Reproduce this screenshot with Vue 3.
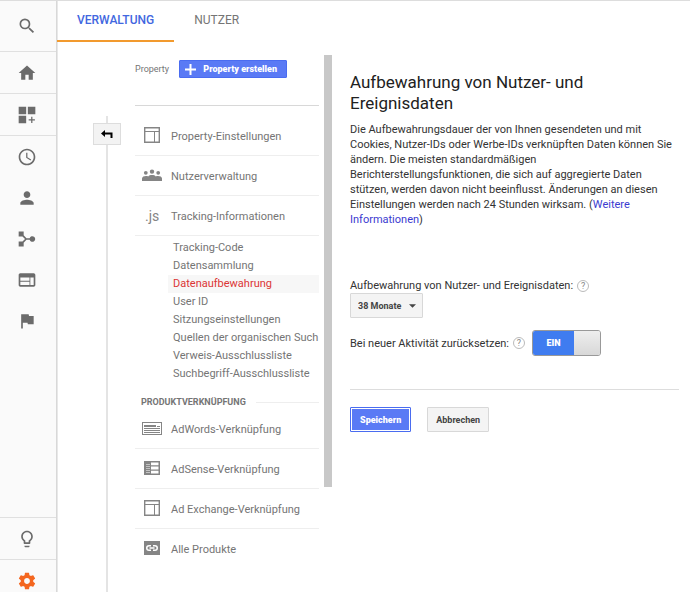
<template>
  <div class="page">
    <aside class="sidebar">
      <a v-for="item in sidebarItems" :key="item.name" href="#" class="sidebar-item" :class="item.name" :aria-label="item.label">
        <svg class="sidebar-icon" viewBox="0 0 24 24">
          <path :d="item.path" />
        </svg>
      </a>
    </aside>

    <div class="main">
      <nav class="tabs">
        <a href="#" class="tab active">VERWALTUNG</a>
        <a href="#" class="tab">NUTZER</a>
      </nav>

      <div class="content">
        <div class="back-column">
          <button type="button" class="back-button" aria-label="Zurück">
            <svg viewBox="0 0 14 10">
              <path d="M1 4.500l4-3.500v2.500h7.500V9h-2V5.500H5V8z" />
            </svg>
          </button>
        </div>

        <div class="property-column">
          <div class="property-header">
            <span>Property</span>
            <button type="button" class="create-button">
              <svg viewBox="0 0 11 11"><path d="M5.5 0v11M0 5.5h11" /></svg>
              Property erstellen
            </button>
          </div>

          <ul class="menu">
            <li v-for="item in menuItems" :key="item.label" class="menu-item">
              <a href="#">
                <span v-if="item.icon === 'js'" class="js-icon">.js</span>
                <svg v-else class="menu-icon" viewBox="0 0 20 16">
                  <path :d="icons[item.icon]" fill-rule="evenodd" />
                </svg>
                {{ item.label }}
              </a>
            </li>
          </ul>

          <ul class="submenu">
            <li v-for="entry in submenu" :key="entry">
              <a href="#" :class="{ selected: entry === selected }" @click.prevent="selected = entry">{{ entry }}</a>
            </li>
          </ul>

          <h2 class="section-title">PRODUKTVERKNÜPFUNG</h2>

          <ul class="menu products">
            <li v-for="item in products" :key="item.label" class="menu-item">
              <a href="#">
                <svg class="menu-icon" viewBox="0 0 20 16">
                  <path :d="icons[item.icon]" fill-rule="evenodd" />
                </svg>
                {{ item.label }}
              </a>
            </li>
          </ul>
        </div>

        <div class="scrollbar"></div>

        <main class="settings">
          <h1>Aufbewahrung von Nutzer- und Ereignisdaten</h1>
          <p class="description">
            Die Aufbewahrungsdauer der von Ihnen gesendeten und mit Cookies, Nutzer-IDs oder Werbe-IDs
            verknüpften Daten können Sie ändern. Die meisten standardmäßigen Berichterstellungsfunktionen,
            die sich auf aggregierte Daten stützen, werden davon nicht beeinflusst. Änderungen an diesen
            Einstellungen werden nach 24 Stunden wirksam. (<a href="#">Weitere Informationen</a>)
          </p>

          <form @submit.prevent>
            <div class="field-label">
              <label for="retention">Aufbewahrung von Nutzer- und Ereignisdaten:</label>
              <span class="help">?</span>
            </div>
            <div class="select-wrapper">
              <select id="retention" v-model="retention">
                <option>38 Monate</option>
              </select>
              <svg class="arrow" viewBox="0 0 8 4"><path d="M0 0h8L4 4z" /></svg>
            </div>

            <div class="reset-row">
              <label for="reset">Bei neuer Aktivität zurücksetzen:</label>
              <span class="help">?</span>
              <label class="switch">
                <input id="reset" v-model="resetOnActivity" type="checkbox" />
                <span class="switch-on">EIN</span>
                <span class="switch-knob"></span>
              </label>
            </div>

            <div class="actions">
              <button type="submit" class="button primary">Speichern</button>
              <button type="button" class="button">Abbrechen</button>
            </div>
          </form>
        </main>
      </div>
    </div>
  </div>
</template>

<script setup>
import { ref } from 'vue'

const retention = ref('38 Monate')
const resetOnActivity = ref(true)
const selected = ref('Datenaufbewahrung')

const sidebarItems = [
  { name: 'search', label: 'Suche', path: 'M15.5 14h-.79l-.28-.27A6.47 6.47 0 0 0 16 9.5 6.5 6.5 0 1 0 9.5 16c1.61 0 3.09-.59 4.23-1.57l.27.28v.79l5 4.99L20.49 19l-4.99-5zm-6 0C7.01 14 5 11.99 5 9.5S7.01 5 9.5 5 14 7.01 14 9.5 11.99 14 9.5 14z' },
  { name: 'home', label: 'Startseite', path: 'M10 20v-6h4v6h5v-8h3L12 3 2 12h3v8z' },
  { name: 'dashboard', label: 'Anpassen', path: 'M2 2h9v9H2zM13 2h9v9h-9zM2 13h9v9H2zM17 14h1.500v3h3v1.500h-3v3H17v-3h-3V17h3z' },
  { name: 'realtime', label: 'Echtzeit', path: 'M11.99 2C6.47 2 2 6.48 2 12s4.47 10 9.99 10C17.52 22 22 17.52 22 12S17.52 2 11.99 2zM12 20c-4.42 0-8-3.58-8-8s3.58-8 8-8 8 3.58 8 8-3.58 8-8 8zm.5-13H11v6l5.25 3.15.75-1.23-4.5-2.67z' },
  { name: 'audience', label: 'Zielgruppe', path: 'M12 12c2.21 0 4-1.79 4-4s-1.79-4-4-4-4 1.79-4 4 1.79 4 4 4zm0 2c-2.67 0-8 1.34-8 4v2h16v-2c0-2.66-5.33-4-8-4z' },
  { name: 'acquisition', label: 'Akquisition', path: 'M2 3h6v4.600L11.400 11H15.200a3.400 3.400 0 1 1 0 2H11.400L8 16.400V21H2v-6h4.600l3-3-3-3H2z' },
  { name: 'behavior', label: 'Verhalten', path: 'M20 4H4c-1.1 0-2 .9-2 2v12c0 1.1.9 2 2 2h16c1.1 0 2-.9 2-2V6c0-1.1-.9-2-2-2zm-5 14H4v-4h11v4zm0-5H4V9h11v4zm5 5h-4V9h4v9z' },
  { name: 'conversions', label: 'Conversions', path: 'M14.4 6L14 4H5v17h2v-7h5.6l.4 2h7V6z' },
  { name: 'discover', label: 'Entdecken', path: 'M9 21c0 .55.45 1 1 1h4c.55 0 1-.45 1-1v-1H9v1zm3-19C8.14 2 5 5.14 5 9c0 2.38 1.19 4.47 3 5.74V17c0 .55.45 1 1 1h6c.55 0 1-.45 1-1v-2.26c1.81-1.27 3-3.36 3-5.74 0-3.86-3.14-7-7-7zm2.85 11.1l-.85.6V16h-4v-2.3l-.85-.6A4.997 4.997 0 0 1 7 9c0-2.76 2.24-5 5-5s5 2.24 5 5c0 1.63-.8 3.16-2.15 4.1z' },
  { name: 'admin', label: 'Verwaltung', path: 'M19.43 12.98c.04-.32.07-.64.07-.98s-.03-.66-.07-.98l2.11-1.65c.19-.15.24-.42.12-.64l-2-3.46c-.12-.22-.39-.3-.61-.22l-2.49 1c-.52-.4-1.08-.73-1.69-.98l-.38-2.65A.488.488 0 0 0 14 2h-4c-.25 0-.46.18-.49.42l-.38 2.65c-.61.25-1.17.59-1.69.98l-2.49-1c-.23-.09-.49 0-.61.22l-2 3.46c-.13.22-.07.49.12.64l2.11 1.65c-.04.32-.07.65-.07.98s.03.66.07.98l-2.11 1.65c-.19.15-.24.42-.12.64l2 3.46c.12.22.39.3.61.22l2.49-1c.52.4 1.08.73 1.69.98l.38 2.65c.03.24.24.42.49.42h4c.25 0 .46-.18.49-.42l.38-2.65c.61-.25 1.17-.59 1.69-.98l2.49 1c.23.09.49 0 .61-.22l2-3.46c.12-.22.07-.49-.12-.64l-2.11-1.65zM12 15.5c-1.93 0-3.5-1.57-3.5-3.5s1.57-3.5 3.5-3.5 3.5 1.57 3.5 3.5-1.57 3.5-3.5 3.5z' }
]

const icons = {
  layout: 'M2 0h16v16H2zM3.4 1.4v2.6h13.2V1.4zM3.4 5v9.600h8.600V5zM13 5v9.600h3.600V5z',
  people: 'M0 14v-2.500c0-1.700 2-2.500 4-2.500 1 0 1.500 0 2.200.4C7 8.400 8.500 8 10 8s3 .4 3.800 1.400C14.500 9 15 9 16 9c2 0 4 .8 4 2.500V14zM7.800 4.600a2.200 2.200 0 1 0 4.400 0 2.200 2.200 0 1 0-4.400 0M1.900 5.800a1.900 1.900 0 1 0 3.800 0 1.900 1.900 0 1 0-3.800 0M14.300 5.800a1.900 1.900 0 1 0 3.800 0 1.900 1.900 0 1 0-3.800 0',
  adwords: 'M0 2h20v13H0zM1 3v11h18V3zM2 5h12v2H2zM2 8h16v1H2zM2 10h16v1H2zM2 12h16v1H2zM15 6h3v1h-3z',
  adsense: 'M2 1h16v14H2zM9 2.500v2.800h7.500V2.500zM9 6.600v2.800h7.500V6.600zM9 10.700v2.800h7.500v-2.800zM4 4h4v.5H4zM4 6h4v.5H4zM4 8h4v.5H4zM4 10h4v.5H4zM4 12h4v.5H4z',
  link: 'M2 1h16v14H2zM7 5a3 3 0 0 0 0 6h2V9.500H7a1.500 1.500 0 0 1 0-3h2V5zM11 5v1.500h2a1.500 1.500 0 0 1 0 3h-2V11h2a3 3 0 0 0 0-6zM7.500 7.300v1.400h5V7.300z'
}

const menuItems = [
  { label: 'Property-Einstellungen', icon: 'layout' },
  { label: 'Nutzerverwaltung', icon: 'people' },
  { label: 'Tracking-Informationen', icon: 'js' }
]

const submenu = [
  'Tracking-Code',
  'Datensammlung',
  'Datenaufbewahrung',
  'User ID',
  'Sitzungseinstellungen',
  'Quellen der organischen Such',
  'Verweis-Ausschlussliste',
  'Suchbegriff-Ausschlussliste'
]

const products = [
  { label: 'AdWords-Verknüpfung', icon: 'adwords' },
  { label: 'AdSense-Verknüpfung', icon: 'adsense' },
  { label: 'Ad Exchange-Verknüpfung', icon: 'layout' },
  { label: 'Alle Produkte', icon: 'link' }
]
</script>

<style>
body {
  margin: 0;
  background: #fff;
}
</style>

<style scoped>
* {
  box-sizing: border-box;
}

.page {
  display: flex;
  height: 100vh;
  overflow: hidden;
  border-top: 1px solid #ddd;
  font-family: Roboto, 'Liberation Sans', sans-serif;
  font-size: 11px;
  color: #333;
}

a {
  color: inherit;
  text-decoration: none;
}

ul {
  list-style: none;
  margin: 0;
  padding: 0;
}

button,
select {
  font-family: inherit;
  margin: 0;
}

/* Sidebar */
.sidebar {
  display: flex;
  flex-direction: column;
  flex-shrink: 0;
  width: 57px;
  background: #fafafa;
  border-right: 1px solid #d8d8d8;
  box-shadow: 1px 0 0 #e8e8e8;
}

.sidebar-item {
  display: flex;
  align-items: center;
  justify-content: center;
  flex-shrink: 0;
  height: 41px;
  padding-right: 2px;
}

.sidebar-icon {
  width: 20px;
  height: 20px;
  fill: #6b6b6b;
}

.sidebar-item.search {
  height: 51px;
  border-bottom: 1px solid #e0e0e0;
}

.sidebar-item.home,
.sidebar-item.dashboard {
  height: 42px;
  border-bottom: 1px solid #e0e0e0;
}

.sidebar-item.discover {
  height: 42px;
  margin-top: auto;
  border-top: 1px solid #e0e0e0;
}

.sidebar-item.admin {
  align-items: flex-start;
  height: 33px;
  padding-top: 11px;
  border-top: 1px solid #e0e0e0;
}

.admin .sidebar-icon {
  fill: #f4661f;
}

/* Tabs */
.main {
  display: flex;
  flex-direction: column;
  flex: 1;
  min-width: 0;
}

.tabs {
  display: flex;
  flex-shrink: 0;
  height: 41px;
}

.tab {
  padding: 0 20px;
  font-size: 12px;
  line-height: 39px;
  color: #757575;
}

.tab.active {
  border-bottom: 2px solid #f29a2e;
  color: #4267e0;
  font-weight: 500;
}

.content {
  display: flex;
  flex: 1;
  min-height: 0;
}

/* Back button on the vertical line */
.back-column {
  display: flex;
  flex-direction: column;
  align-items: center;
  flex-shrink: 0;
  width: 28px;
  margin: 74px 14px 0 36px;
}

.back-column::before,
.back-column::after {
  content: '';
  width: 2px;
  height: 7px;
  background: #e4e4e4;
}

.back-column::after {
  flex: 1;
}

.back-button {
  display: flex;
  align-items: center;
  justify-content: center;
  width: 28px;
  height: 22px;
  padding: 0;
  border: 1px solid #ddd;
  background: #f3f3f3;
}

.back-button svg {
  width: 14px;
  height: 10px;
}

/* Property column */
.property-column {
  flex-shrink: 0;
  width: 184px;
  color: #757575;
}

.property-header {
  display: flex;
  align-items: flex-start;
  justify-content: space-between;
  height: 64px;
  padding: 18px 32px 0 0;
  border-bottom: 1px solid #d8d8d8;
  font-size: 9px;
  line-height: 18px;
}

.create-button {
  display: flex;
  align-items: center;
  gap: 7px;
  height: 18px;
  padding: 0 9px 0 5px;
  border: 1px solid #4a6cf0;
  border-radius: 1px;
  background: #5a7af5;
  color: #fff;
  font-size: 9px;
  font-weight: 900;
  white-space: nowrap;
}

.create-button svg {
  width: 11px;
  height: 11px;
  stroke: #fff;
  stroke-width: 2;
}

.menu {
  padding-top: 10px;
}

.menu-item {
  height: 40px;
  border-bottom: 1px solid #eee;
}

.menu-item a {
  display: flex;
  align-items: center;
  gap: 9px;
  height: 39px;
  padding: 2px 0 0 7px;
  white-space: nowrap;
}

.menu-icon {
  width: 20px;
  height: 16px;
  margin-bottom: 4px;
  fill: #858585;
}

.js-icon {
  width: 20px;
  padding-left: 3px;
  margin-bottom: 2px;
  font-size: 14px;
  color: #858585;
}

.submenu {
  padding: 3px 0 0 33px;
}

.submenu a {
  display: block;
  height: 18px;
  padding-left: 5px;
  line-height: 18px;
  white-space: nowrap;
}

.submenu .selected {
  background: #f7f7f7;
  color: #dc3535;
}

.section-title {
  display: flex;
  align-items: center;
  gap: 10px;
  margin: 13px 0 0;
  padding-left: 6px;
  font-size: 9px;
  font-weight: 700;
  line-height: 12px;
}

.section-title::after {
  content: '';
  flex: 1;
  height: 1px;
  background: #eee;
}

.menu.products {
  padding-top: 1px;
}

.products .menu-item:last-child {
  border-bottom: 0;
}

.scrollbar {
  flex-shrink: 0;
  width: 8px;
  height: 432px;
  margin: 13px 0 0 5px;
  background: #c8c8c8;
}

/* Settings */
.settings {
  flex: 1;
  min-width: 0;
  padding: 30px 11px 0 18px;
}

h1 {
  margin: 0;
  font-size: 17px;
  font-weight: 400;
  line-height: 21px;
  color: #212121;
}

.description {
  margin: 8px 0 0;
  line-height: 15px;
}

.description a {
  color: #3b3bd0;
}

form {
  margin-top: 51px;
}

.field-label,
.reset-row {
  display: flex;
  align-items: center;
  gap: 4px;
  line-height: 15px;
}

.help {
  width: 12px;
  height: 12px;
  border: 1px solid #bbb;
  border-radius: 50%;
  color: #888;
  font-size: 9px;
  line-height: 10px;
  text-align: center;
}

.select-wrapper {
  position: relative;
  width: 73px;
  margin-bottom: 12px;
}

select {
  display: block;
  width: 100%;
  height: 25px;
  padding: 0 7px;
  border: 1px solid #d8d8d8;
  border-radius: 1px;
  background: #f4f4f4;
  color: #444;
  font-size: 9px;
  font-weight: 700;
  appearance: none;
}

.arrow {
  position: absolute;
  top: 11px;
  right: 7px;
  width: 7px;
  height: 4px;
  fill: #444;
  pointer-events: none;
}

.switch {
  display: flex;
  width: 69px;
  height: 26px;
  margin-left: 3px;
  border: 1px solid #999;
  border-radius: 3px;
  overflow: hidden;
  line-height: 24px;
}

.switch input {
  appearance: none;
  width: 0;
  height: 0;
  margin: 0;
}

.switch-on {
  flex: 1;
  background: #3f7cf0;
  color: #fff;
  font-size: 9px;
  font-weight: 900;
  text-align: center;
}

.switch-knob {
  width: 26px;
  background: linear-gradient(#eee, #d8d8d8);
}

.actions {
  display: flex;
  gap: 16px;
  margin-top: 33px;
  padding-top: 17px;
  border-top: 1px solid #ddd;
}

.button {
  height: 25px;
  padding: 0 8px;
  border: 1px solid #d8d8d8;
  border-radius: 1px;
  background: #f4f4f4;
  color: #444;
  font-size: 9px;
  font-weight: 700;
}

.button.primary {
  padding: 0 9px;
  border-color: #4a6cf0;
  background: #5a7af5;
  box-shadow: inset 0 0 0 1px #fff;
  color: #fff;
  font-weight: 900;
}
</style>
